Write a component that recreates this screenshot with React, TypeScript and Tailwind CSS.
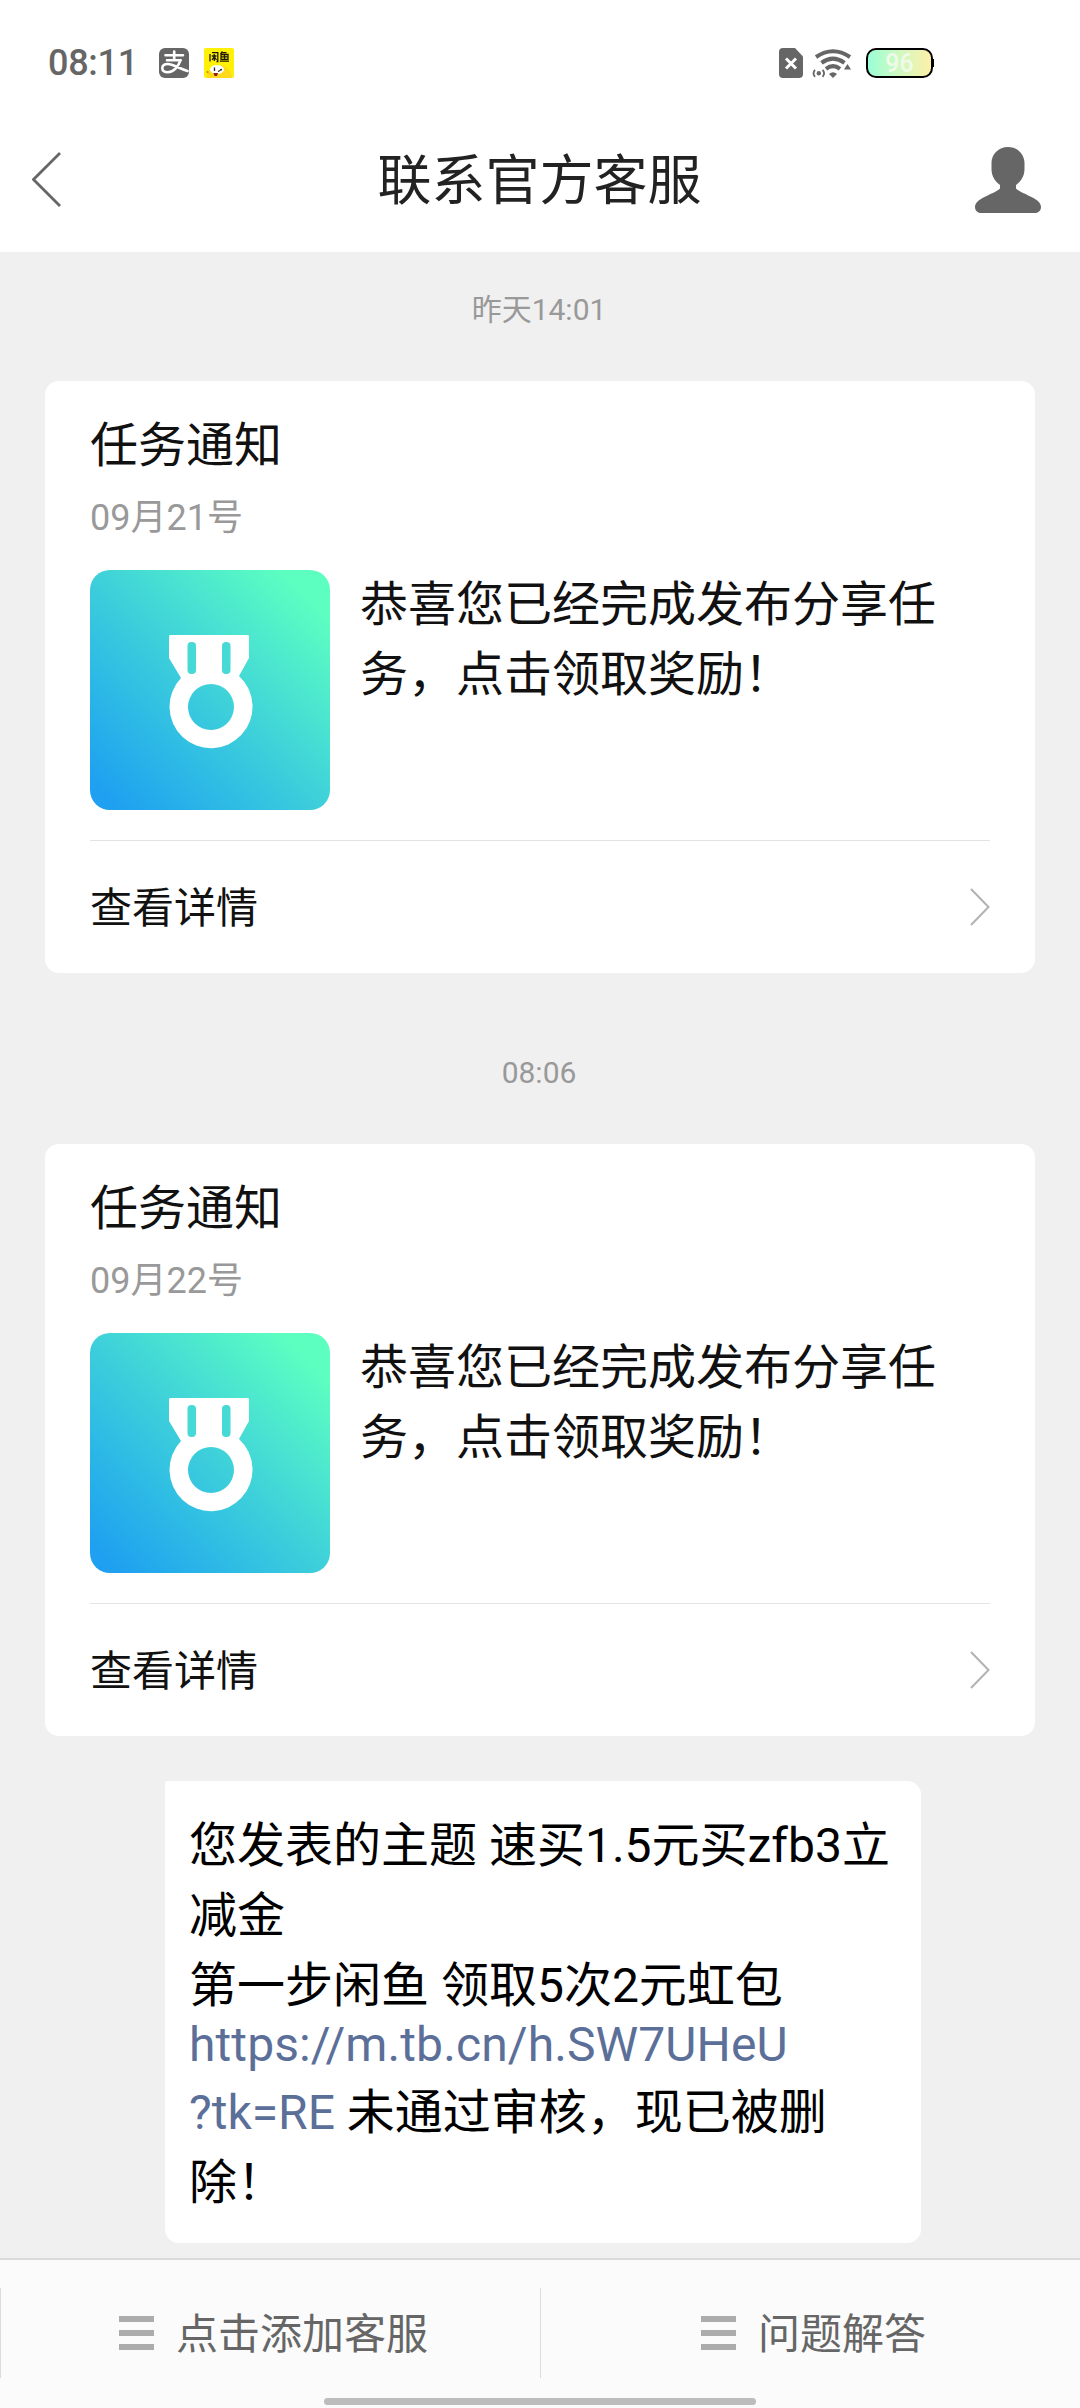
const notices = [
  { time: "昨天14:01", date: "09月21号" },
  { time: "08:06", date: "09月22号" },
];

function StatusBar() {
  return (
    <div className="flex h-[108px] items-center pt-[18px] pl-12 text-[#666]">
      <span className="w-[88px] text-[36px] leading-[36px] font-medium tracking-[-0.3px]">08:11</span>
      <svg className="ml-[23px] h-[30px] w-[30px]" viewBox="0 0 30 30">
        <rect width="30" height="30" rx="6" fill="#666" />
        <g fill="none" stroke="#fff" strokeWidth="2.6" strokeLinecap="round">
          <path d="M6.500 7.200H24M15.200 3.500V12M8 12.200H21.500" />
          <path d="M21.500 12.200C19.500 18.500 14.500 24.300 8.800 24.300C5.400 24.300 3.300 22.800 3.300 20.200C3.300 17.600 5.600 16 8.800 16C14 16 19 20 28.500 23" />
        </g>
      </svg>
      <svg className="ml-[15px] h-[30px] w-[30px]" viewBox="0 0 30 30">
        <rect width="30" height="30" rx="2" fill="#fff007" />
        <path d="M3 30A12.500 12.500 0 0 1 28 30Z" fill="#ffd91c" />
        <g fill="none" stroke="#1e1a05" strokeWidth="1.3">
          <path d="M6 6V13.500M8 4.700H13.800V13.500H12.500M7.800 8H12.500M10.300 6V13M10 9L8 12M10.500 9L12.500 12" />
          <path d="M18.500 3.500L16.500 6M18 4.700H22.500M17 6.500H24V11.300H17ZM17 8.900H24M20.500 6.500V11.300M15.800 13.200H25" />
        </g>
        <ellipse cx="13" cy="21.500" rx="7" ry="4.600" fill="#fff" />
        <path d="M10.500 19.500V23M14 23.500L16 22.500M16 22L18 21.500" stroke="#222" strokeWidth="1.300" />
        <path d="M9.500 25H14L13 28H10.500Z" fill="#8a1f10" />
        <circle cx="3.500" cy="24" r="1.200" fill="#d99b00" />
      </svg>
      <svg className="ml-[545px] h-[30px] w-6" viewBox="0 0 24 30">
        <path d="M4 0H16L24 8.500V26Q24 30 20 30H4Q0 30 0 26V4Q0 0 4 0Z" fill="#666" />
        <path d="M7 10.500L17 20.500M17 10.500L7 20.500" stroke="#fff" strokeWidth="3" />
      </svg>
      <svg className="ml-[9px] h-[30px] w-[40px]" viewBox="0 0 40 30">
        <g fill="none" stroke="#666" strokeWidth="4">
          <path d="M4 9Q21 -2.500 38 9" />
          <path d="M9.500 14.800Q21 6.500 32.500 14.800" />
          <path d="M14 20.800Q21 15.500 28 20.800" />
        </g>
        <path d="M17 26Q21 22.500 25 26L21 30Z" fill="#666" />
        <circle cx="6.800" cy="25.200" r="2.200" fill="#666" />
        <path d="M3 21.800Q0 25.200 3 28.800M10.600 21.800Q13.600 25.200 10.600 28.800" fill="none" stroke="#666" strokeWidth="1.800" />
        <path d="M35.500 16L39 21.500H32Z" fill="#666" />
      </svg>
      <div className="ml-[14px] flex h-[30px] w-[67px] items-center justify-center rounded-[10px] border-2 border-black bg-linear-to-r from-[#98ffd6] to-[#fdf0a8] text-[25px] leading-none font-medium text-[#effbe9]">
        96
      </div>
      <span className="h-2 w-px bg-black" />
    </div>
  );
}

function Header() {
  return (
    <header className="flex h-36 items-center justify-between pr-[39px] pl-8 text-[#222]">
      <svg className="h-[56px] w-[72px]" viewBox="0 0 72 56" fill="none" stroke="#666" strokeWidth="2.8">
        <path d="M28 1L1.500 27.500L28 54" />
      </svg>
      <h1 className="pt-1 text-[54px] leading-[54px]">联系官方客服</h1>
      <svg className="h-[66px] w-[66px]" viewBox="0 0 66 66" fill="#666">
        <path d="M33 0C42.500 0 49.500 7 49.500 16V22C49.500 29 46 34.500 41 38V41.500C43 44 52 47.500 58.500 51C64 54 66 57 66 60C66 63.500 63.500 66 60 66H6C2.500 66 0 63.500 0 60C0 57 2 54 7.500 51C14 47.500 23 44 25 41.500V38C20 34.500 16.500 29 16.500 22V16C16.500 7 23.500 0 33 0Z" />
      </svg>
    </header>
  );
}

function Medal() {
  return (
    <div className="h-60 w-60 shrink-0 rounded-[20px] bg-linear-to-tr from-[#1fa0f0] from-6% via-[#3ed0da] via-50% to-[#5dffc0] to-90%">
      <svg className="h-full w-full" viewBox="0 0 240 240">
        <path
          d="M80 65H158Q159 65 159 67V88L149 106A41.500 41.500 0 1 1 91 108L79 88V67Q79 65 80 65ZM121 114A23 23 0 1 0 121 160A23 23 0 1 0 121 114Z"
          fill="#fff"
          fillRule="evenodd"
        />
        <rect x="97.500" y="72" width="8.500" height="32" rx="4" fill="#46d9d5" />
        <rect x="132" y="72" width="8.500" height="32" rx="4" fill="#46d9d5" />
      </svg>
    </div>
  );
}

function NoticeCard({ date }: { date: string }) {
  return (
    <section className="mx-[45px] h-[592px] rounded-[14px] bg-white px-[45px] pt-[37px]">
      <h2 className="text-[48px] leading-[56px] text-[#111]">任务通知</h2>
      <p className="mt-[23px] text-[36px] leading-[42px] text-[#999]">{date}</p>
      <div className="mt-[31px] flex gap-[30px]">
        <Medal />
        <p className="w-[600px] text-[48px] leading-[70px] text-[#111]">恭喜您已经完成发布分享任务，点击领取奖励！</p>
      </div>
      <div className="mt-[30px] flex h-[133px] items-center justify-between border-t border-[#e3e3e3] text-[42px] text-[#111]">
        <span className="pt-0.5">查看详情</span>
        <svg className="h-[38px] w-5" viewBox="0 0 20 38" fill="none" stroke="#b2b2b2" strokeWidth="2">
          <path d="M1 1L18.500 19L1 37" />
        </svg>
      </div>
    </section>
  );
}

function Bubble() {
  return (
    <div className="ml-[165px] h-[462px] w-[756px] rounded-[14px] rounded-tl-[2px] bg-white px-6 pt-[30px] text-[48px] leading-[70px] whitespace-nowrap text-black">
      <p>您发表的主题 速买1.5元买zfb3立</p>
      <p>减金</p>
      <p>第一步闲鱼 领取5次2元虹包</p>
      <p className="h-[57px] leading-[48px] tracking-[0.1px] text-[#5b6f99]">https://m.tb.cn/h.SW7UHeU</p>
      <p>
        <span className="text-[#5b6f99]">?tk=RE</span> 未通过审核，现已被删
      </p>
      <p>除！</p>
    </div>
  );
}

function MenuButton({ label }: { label: string }) {
  return (
    <div className="flex h-[90px] w-[540px] items-center justify-center border-l border-[#dcdcdc] pl-1.5">
      <div className="mr-[22px] flex flex-col gap-2">
        <span className="h-1.5 w-[35px] bg-[#acacac]" />
        <span className="h-1.5 w-[35px] bg-[#acacac]" />
        <span className="h-1.5 w-[35px] bg-[#acacac]" />
      </div>
      <span className="pt-[3px] text-[42px] leading-[50px] text-[#666]">{label}</span>
    </div>
  );
}

export default function App() {
  return (
    <div className="flex h-[2408px] w-[1080px] flex-col overflow-hidden bg-[#f0f0f0] font-[Roboto,'Noto_Sans_CJK_SC',sans-serif]">
      <div className="h-[252px] shrink-0 bg-white">
        <StatusBar />
        <Header />
      </div>
      <main className="h-[2006px] shrink-0">
        {notices.map((n) => (
          <div key={n.date} className="h-[763px]">
            <div className="flex h-[129px] items-center justify-center pr-0.5 pb-3.5 text-[30px] text-[#999]">{n.time}</div>
            <NoticeCard date={n.date} />
          </div>
        ))}
        <div className="pt-[3px]">
          <Bubble />
        </div>
      </main>
      <footer className="h-[150px] shrink-0 border-t-2 border-[#dadada] bg-[#fbfbfb] pt-7">
        <div className="flex">
          <MenuButton label="点击添加客服" />
          <MenuButton label="问题解答" />
        </div>
        <div className="mx-auto mt-5 h-[7px] w-[432px] rounded-full bg-[#bcbcbc]" />
      </footer>
    </div>
  );
}
